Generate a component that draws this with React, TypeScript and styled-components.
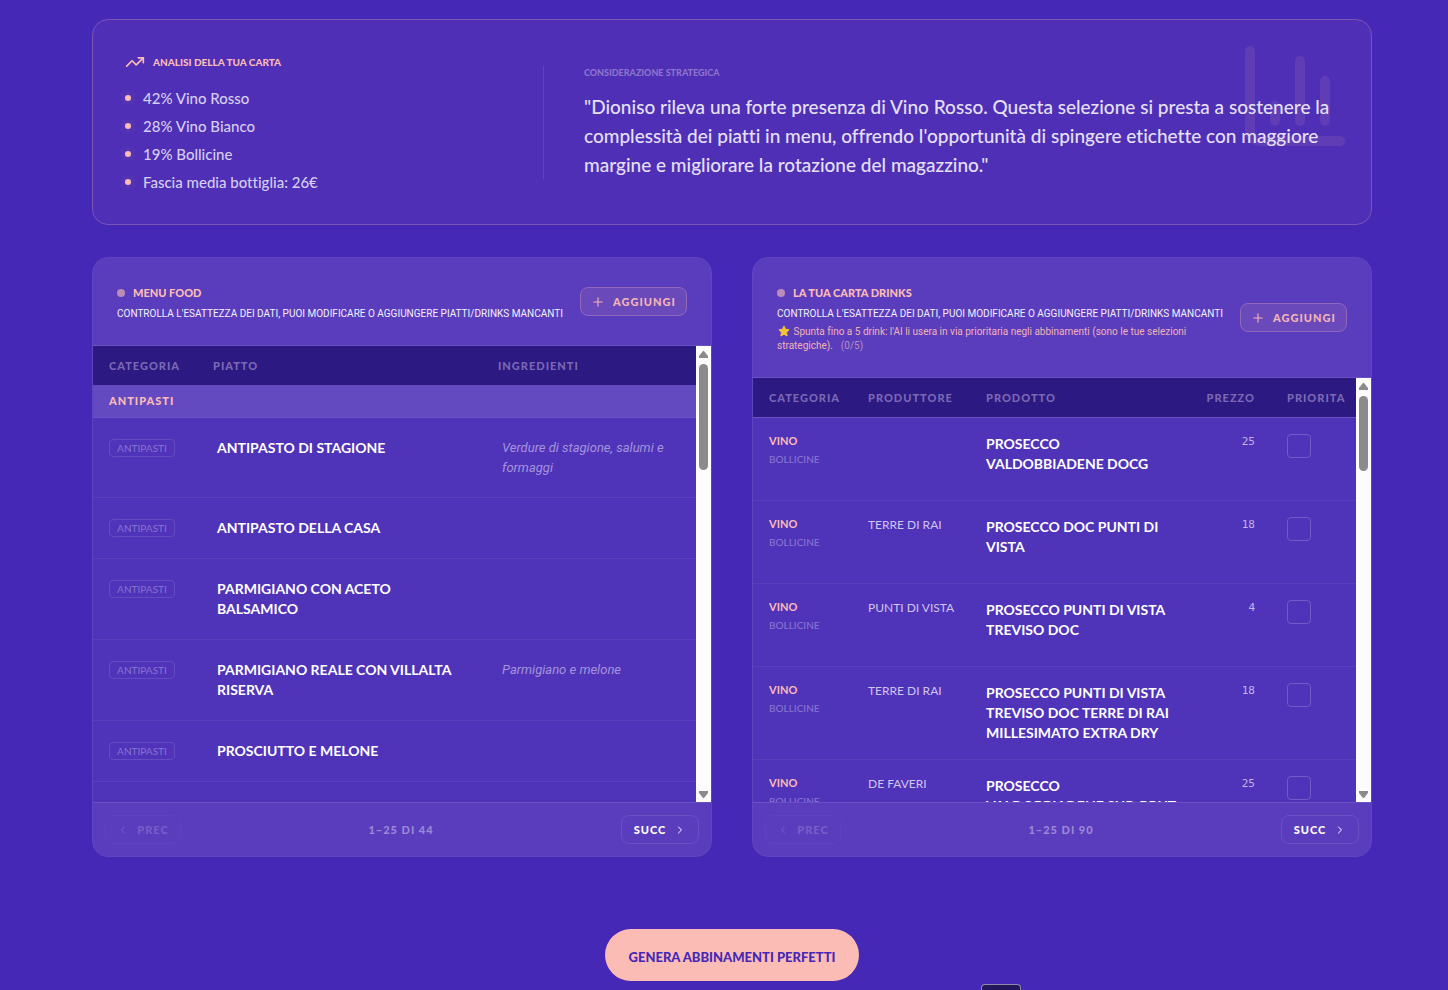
import React from "react";
import styled, { createGlobalStyle } from "styled-components";
import { ChartColumn, ChevronLeft, ChevronRight, Plus, TrendingUp } from "lucide-react";

const pink = "#fbbcb5";
const sans = `Lato, "Open Sans", sans-serif`;
const compact = `Roboto, "Open Sans", sans-serif`;

const GlobalStyle = createGlobalStyle`
  *, *::before, *::after { box-sizing: border-box; }
  body {
    margin: 0;
    background: #4528b5;
    color: #fff;
    font-family: ${sans};
    font-variant-ligatures: none;
  }
  h2, p, ul { margin: 0; padding: 0; }
  button { font-family: inherit; cursor: pointer; }
`;

const Shell = styled.div`
  padding: 19px 0 8px 16px;
`;

const Page = styled.main`
  max-width: 1280px;
  margin: 0 auto;
`;

const SummaryCard = styled.section`
  position: relative;
  display: grid;
  grid-template-columns: repeat(3, 1fr);
  align-items: center;
  gap: 40px;
  padding: 32px;
  border: 1px solid #7b54b5;
  border-radius: 16px;
  background: #4e2fb5;
`;

const Watermark = styled(ChartColumn)`
  position: absolute;
  top: 16px;
  right: 16px;
  color: ${pink};
  opacity: 0.1;
`;

const CardTitle = styled.h2`
  display: flex;
  align-items: center;
  gap: 8px;
  height: 20px;
  margin-bottom: 16px;
  color: ${pink};
  font-size: 10px;
  font-weight: 900;
  line-height: 20px;
`;

const Facts = styled.ul`
  display: grid;
  gap: 8px;
  list-style: none;
`;

const Fact = styled.li`
  display: flex;
  align-items: center;
  gap: 12px;
  color: #d6cdf0;
  font-size: 15px;
  font-weight: 500;
  line-height: 20px;
  &::before {
    content: "";
    width: 6px;
    height: 6px;
    border-radius: 50%;
    background: ${pink};
    box-shadow: 0 0 8px rgba(251, 188, 181, 0.3);
  }
`;

const Advice = styled.div`
  position: relative;
  grid-column: span 2;
  padding-left: 40px;
  border-left: 1px solid #5f43bd;
`;

const AdviceTitle = styled.h2`
  margin-bottom: 12px;
  color: #8d74cd;
  font-size: 9px;
  font-weight: 900;
  line-height: 14px;
`;

const Quote = styled.p`
  color: #e6e0f6;
  font-size: 19px;
  font-weight: 500;
  line-height: 29px;
  white-space: pre-line;
`;

const Panels = styled.div`
  display: grid;
  grid-template-columns: 1fr 1fr;
  gap: 40px;
  margin-top: 32px;
`;

const Panel = styled.section`
  display: flex;
  flex-direction: column;
  min-width: 0;
  height: 600px;
  overflow: hidden;
  border: 1px solid #6044bf;
  border-radius: 16px;
  background: #5a3dbc;
`;

const PanelHead = styled.header`
  display: flex;
  align-items: center;
  gap: 4px;
  padding: 24px;
  border-bottom: 1px solid #6a50c4;
`;

const PanelIntro = styled.div`
  flex: 1;
  min-width: 0;
`;

const PanelTitle = styled.h2`
  display: flex;
  align-items: center;
  gap: 8px;
  color: ${pink};
  font-size: 11px;
  font-weight: 900;
  line-height: 22px;
  &::before {
    content: "";
    width: 8px;
    height: 8px;
    border-radius: 50%;
    background: #b98cb9;
  }
`;

const Hint = styled.p`
  margin-top: 2px;
  color: #f3f0fb;
  font-family: ${compact};
  font-size: 10px;
  line-height: 15px;
  white-space: nowrap;
`;

const Note = styled.p`
  margin-top: 4px;
  color: #f0b3b5;
  font-family: ${compact};
  font-size: 10px;
  line-height: 14px;
  white-space: pre-line;
  svg { margin: 0 1px; vertical-align: -2px; }
  span { margin-left: 8px; color: #b690bd; }
`;

const AddButton = styled.button`
  display: flex;
  flex: none;
  align-items: center;
  justify-content: center;
  gap: 8px;
  width: 107px;
  height: 29px;
  padding: 0;
  border: 1px solid #9067bb;
  border-radius: 8px;
  background: #6a4aba;
  color: #f3b5b5;
  font-size: 11px;
  font-weight: 900;
  letter-spacing: 1px;
`;

const PanelBody = styled.div`
  display: flex;
  flex: 1;
  min-height: 0;
  background: #4f33b9;
`;

const Scroller = styled.div`
  flex: 1;
  min-width: 0;
  overflow-y: auto;
  scrollbar-width: none;
`;

const Scrollbar = styled.div`
  display: flex;
  flex: none;
  flex-direction: column;
  align-items: center;
  width: 15px;
  padding: 5px 0 4px;
  background: #fcfcfc;
`;

const Arrow = styled.svg`
  display: block;
  flex: none;
  fill: #8b8b8b;
`;

const Thumb = styled.div<{ $height: number }>`
  width: 9px;
  height: ${(p) => p.$height}px;
  margin: 6px 0 auto;
  border-radius: 5px;
  background: #8b8b8b;
`;

const Table = styled.table`
  width: 100%;
  table-layout: fixed;
  border-spacing: 0;
  text-align: left;
`;

const HeadCell = styled.th<{ $width?: number; $end?: boolean; $line?: boolean }>`
  position: sticky;
  top: 0;
  z-index: 1;
  width: ${(p) => (p.$width ? `${p.$width}px` : "auto")};
  height: ${(p) => (p.$line ? 40 : 39)}px;
  padding: 0 ${(p) => (p.$end ? 16 : 0)}px 1px 16px;
  border-bottom: ${(p) => (p.$line ? "1px solid #6a50c4" : "0")};
  background: #2c1981;
  color: #7b68b5;
  font-size: 11px;
  font-weight: 900;
  letter-spacing: 1px;
  text-align: ${(p) => (p.$end ? "right" : "left")};
`;

const GroupCell = styled.th`
  height: 33px;
  padding: 0 16px 1px;
  border-bottom: 1px solid #6a52c5;
  background: #644ac0;
  color: ${pink};
  font-size: 11px;
  font-weight: 900;
  letter-spacing: 1px;
`;

const FoodCell = styled.td`
  padding: 20px 16px 20px 20px;
  border-bottom: 1px solid #5a3fbd;
  vertical-align: top;
`;

const TagCell = styled(FoodCell)`
  padding-left: 16px;
`;

const IngredientsCell = styled(FoodCell)`
  padding-bottom: 19px;
  color: #a493dc;
  font-family: ${compact};
  font-size: 13px;
  font-style: italic;
  line-height: 20px;
`;

const Tag = styled.span`
  display: block;
  width: 66px;
  margin-top: 1px;
  border: 1px solid #654bc2;
  border-radius: 4px;
  color: #846fce;
  font-size: 10px;
  font-weight: 500;
  line-height: 16px;
  text-align: center;
`;

const Name = styled.div`
  color: #fff;
  font-size: 14px;
  font-weight: 700;
  line-height: 20px;
  white-space: pre;
`;

const DrinkCell = styled.td<{ $end?: boolean }>`
  height: 83px;
  padding: 16px ${(p) => (p.$end ? 16 : 0)}px 16px 16px;
  border-bottom: 1px solid #5a3fbd;
  vertical-align: top;
  text-align: ${(p) => (p.$end ? "right" : "left")};
`;

const Kind = styled.div`
  color: ${pink};
  font-size: 11px;
  font-weight: 700;
  line-height: 14px;
`;

const SubKind = styled.div`
  margin-top: 4px;
  color: #8973cf;
  font-size: 10px;
  font-weight: 500;
  line-height: 14px;
`;

const Producer = styled.div`
  color: #cfc5ed;
  font-size: 12px;
  line-height: 16px;
`;

const Price = styled.div`
  color: #c1b5e8;
  font: 11px/16px "DejaVu Sans Mono", monospace;
`;

const Tick = styled.input`
  display: block;
  width: 24px;
  height: 24px;
  margin: 0;
  appearance: none;
  border: 1px solid #7459c8;
  border-radius: 4px;
  &:checked { background: ${pink}; }
`;

const Pager = styled.footer`
  display: flex;
  align-items: center;
  justify-content: space-between;
  padding: 12px;
  border-top: 1px solid #6a50c4;
  color: #9b88d6;
  font-size: 11px;
  font-weight: 900;
  letter-spacing: 1px;
`;

const PageButton = styled.button`
  display: flex;
  align-items: center;
  justify-content: center;
  gap: 8px;
  width: 78px;
  height: 29px;
  padding: 0;
  border: 1px solid #6a50c4;
  border-radius: 8px;
  background: transparent;
  color: #fff;
  font-size: 11px;
  font-weight: 900;
  letter-spacing: inherit;
  &:disabled {
    width: 76px;
    border-color: #5e42be;
    color: #775dc8;
  }
`;

const Actions = styled.div`
  display: flex;
  justify-content: center;
  margin-top: 72px;
`;

const GenerateButton = styled.button`
  width: 254px;
  height: 52px;
  padding: 4px 0 0;
  border: 0;
  border-radius: 26px;
  background: ${pink};
  color: #4528b5;
  font-size: 13px;
  font-weight: 900;
  line-height: 20px;
`;

const Dock = styled.div`
  position: fixed;
  right: 427px;
  bottom: 0;
  width: 40px;
  height: 6px;
  border: 1px solid #8f8ba6;
  border-bottom: 0;
  border-radius: 4px 4px 0 0;
  background: #24175c;
`;

function Star() {
  return (
    <svg width="12" height="12" viewBox="0 0 24 24" aria-hidden="true">
      <path
        d="M12 2l3 6.500 7 1-5 5 1.200 7.500-6.200-3.500L5.800 22 7 14.500l-5-5 7-1z"
        fill="#f3c331"
        stroke="#f3c331"
        strokeWidth="2"
        strokeLinejoin="round"
      />
    </svg>
  );
}

function ScrollRail({ thumb }: { thumb: number }) {
  return (
    <Scrollbar aria-hidden="true">
      <Arrow width="9" height="7" viewBox="0 0 9 7">
        <path d="M4 0h1l4 5v2H0V5z" />
      </Arrow>
      <Thumb $height={thumb} />
      <Arrow width="9" height="7" viewBox="0 0 9 7">
        <path d="M4 7h1l4-5V0H0v2z" />
      </Arrow>
    </Scrollbar>
  );
}

function PanelPager({ total }: { total: number }) {
  return (
    <Pager>
      <PageButton disabled>
        <ChevronLeft size={12} />
        PREC
      </PageButton>
      <span>1–25 DI {total}</span>
      <PageButton>
        SUCC
        <ChevronRight size={12} />
      </PageButton>
    </Pager>
  );
}

function Add() {
  return (
    <AddButton>
      <Plus size={14} strokeWidth={2} />
      AGGIUNGI
    </AddButton>
  );
}

const hint = "CONTROLLA L'ESATTEZZA DEI DATI, PUOI MODIFICARE O AGGIUNGERE PIATTI/DRINKS MANCANTI";

const facts = ["42% Vino Rosso", "28% Vino Bianco", "19% Bollicine", "Fascia media bottiglia: 26€"];

const dishes = [
  { name: "ANTIPASTO DI STAGIONE", ingredients: "Verdure di stagione, salumi e formaggi" },
  { name: "ANTIPASTO DELLA CASA", ingredients: "" },
  { name: "PARMIGIANO CON ACETO\nBALSAMICO", ingredients: "" },
  { name: "PARMIGIANO REALE CON VILLALTA\nRISERVA", ingredients: "Parmigiano e melone" },
  { name: "PROSCIUTTO E MELONE", ingredients: "" },
];

const drinks = [
  { producer: "", name: "PROSECCO\nVALDOBBIADENE DOCG", price: 25 },
  { producer: "TERRE DI RAI", name: "PROSECCO DOC PUNTI DI\nVISTA", price: 18 },
  { producer: "PUNTI DI VISTA", name: "PROSECCO PUNTI DI VISTA\nTREVISO DOC", price: 4 },
  { producer: "TERRE DI RAI", name: "PROSECCO PUNTI DI VISTA\nTREVISO DOC TERRE DI RAI\nMILLESIMATO EXTRA DRY", price: 18 },
  { producer: "DE FAVERI", name: "PROSECCO\nVALDOBBIADENE SUP. BRUT", price: 25 },
];

export default function App() {
  return (
    <Shell>
      <GlobalStyle />
      <Page>
        <SummaryCard>
          <Watermark size={120} />
          <div>
            <CardTitle>
              <TrendingUp size={20} strokeWidth={2} />
              ANALISI DELLA TUA CARTA
            </CardTitle>
            <Facts>
              {facts.map((fact) => (
                <Fact key={fact}>{fact}</Fact>
              ))}
            </Facts>
          </div>
          <Advice>
            <AdviceTitle>CONSIDERAZIONE STRATEGICA</AdviceTitle>
            <Quote>
              {`"Dioniso rileva una forte presenza di Vino Rosso. Questa selezione si presta a sostenere la
complessità dei piatti in menu, offrendo l'opportunità di spingere etichette con maggiore
margine e migliorare la rotazione del magazzino."`}
            </Quote>
          </Advice>
        </SummaryCard>

        <Panels>
          <Panel>
            <PanelHead>
              <PanelIntro>
                <PanelTitle>MENU FOOD</PanelTitle>
                <Hint>{hint}</Hint>
              </PanelIntro>
              <Add />
            </PanelHead>
            <PanelBody>
              <Scroller>
                <Table>
                  <thead>
                    <tr>
                      <HeadCell $width={104}>CATEGORIA</HeadCell>
                      <HeadCell>PIATTO</HeadCell>
                      <HeadCell $width={214}>INGREDIENTI</HeadCell>
                    </tr>
                  </thead>
                  <tbody>
                    <tr>
                      <GroupCell colSpan={3}>ANTIPASTI</GroupCell>
                    </tr>
                    {dishes.map((dish) => (
                      <tr key={dish.name}>
                        <TagCell>
                          <Tag>ANTIPASTI</Tag>
                        </TagCell>
                        <FoodCell>
                          <Name>{dish.name}</Name>
                        </FoodCell>
                        <IngredientsCell>{dish.ingredients}</IngredientsCell>
                      </tr>
                    ))}
                  </tbody>
                </Table>
              </Scroller>
              <ScrollRail thumb={106} />
            </PanelBody>
            <PanelPager total={44} />
          </Panel>

          <Panel>
            <PanelHead>
              <PanelIntro>
                <PanelTitle>LA TUA CARTA DRINKS</PanelTitle>
                <Hint>{hint}</Hint>
                <Note>
                  <Star />
                  {" Spunta fino a 5 drink: l'AI li usera in via prioritaria negli abbinamenti (sono le tue selezioni\nstrategiche)."}
                  <span>(0/5)</span>
                </Note>
              </PanelIntro>
              <Add />
            </PanelHead>
            <PanelBody>
              <Scroller>
                <Table>
                  <thead>
                    <tr>
                      <HeadCell $line $width={99}>CATEGORIA</HeadCell>
                      <HeadCell $line $width={118}>PRODUTTORE</HeadCell>
                      <HeadCell $line>PRODOTTO</HeadCell>
                      <HeadCell $line $width={90} $end>
                        PREZZO
                      </HeadCell>
                      <HeadCell $line $width={85}>PRIORITA</HeadCell>
                    </tr>
                  </thead>
                  <tbody>
                    {drinks.map((drink, i) => (
                      <tr key={i}>
                        <DrinkCell>
                          <Kind>VINO</Kind>
                          <SubKind>BOLLICINE</SubKind>
                        </DrinkCell>
                        <DrinkCell>
                          <Producer>{drink.producer}</Producer>
                        </DrinkCell>
                        <DrinkCell>
                          <Name>{drink.name}</Name>
                        </DrinkCell>
                        <DrinkCell $end>
                          <Price>{drink.price}</Price>
                        </DrinkCell>
                        <DrinkCell>
                          <Tick type="checkbox" aria-label={`Priorita ${drink.name}`} />
                        </DrinkCell>
                      </tr>
                    ))}
                  </tbody>
                </Table>
              </Scroller>
              <ScrollRail thumb={75} />
            </PanelBody>
            <PanelPager total={90} />
          </Panel>
        </Panels>

        <Actions>
          <GenerateButton>GENERA ABBINAMENTI PERFETTI</GenerateButton>
        </Actions>
      </Page>
      <Dock />
    </Shell>
  );
}
